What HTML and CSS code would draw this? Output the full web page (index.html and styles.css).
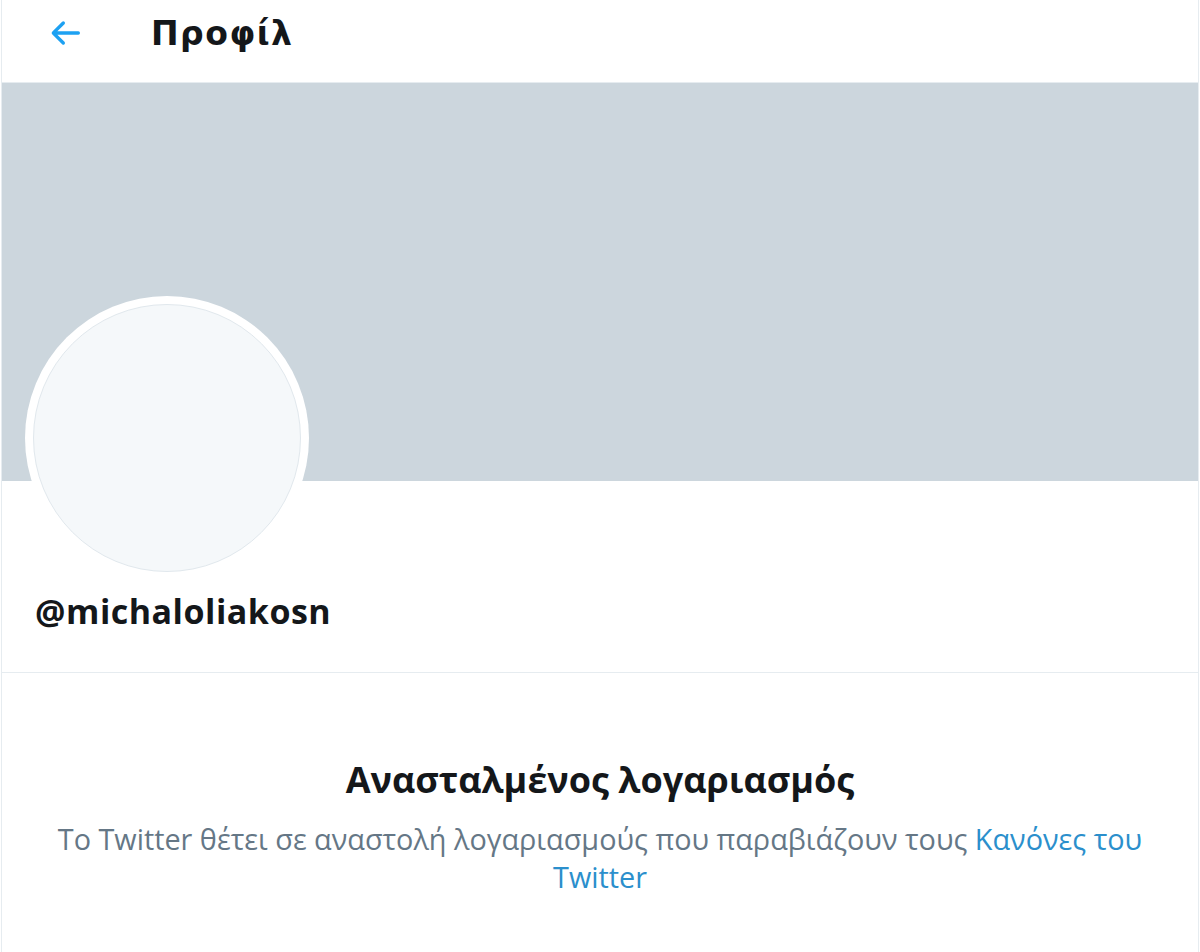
FILE: index.html
```html
<!DOCTYPE html>
<html lang="el">
<head>
<meta charset="utf-8">
<title>Προφίλ</title>
<link rel="stylesheet" href="styles.css">
</head>
<body>
<div class="page">
  <header class="topbar">
    <a class="back" href="#" aria-label="Πίσω">
      <svg viewBox="0 0 24 24" width="40" height="40"><path d="M20 11H7.414l4.293-4.293a1 1 0 0 0-1.414-1.414l-6 6a1 1 0 0 0 0 1.414l6 6a1 1 0 0 0 1.414-1.414L7.414 13H20a1 1 0 1 0 0-2z"/></svg>
    </a>
    <h1 class="title">Προφίλ</h1>
  </header>
  <div class="banner"></div>
  <section class="profile">
    <div class="avatar"><div class="avatar-inner"></div></div>
    <div class="handle">@michaloliakosn</div>
  </section>
  <section class="suspended">
    <h2 class="s-title">Ανασταλμένος λογαριασμός</h2>
    <p class="s-text">Το Twitter θέτει σε αναστολή λογαριασμούς που παραβιάζουν τους <a href="#">Κανόνες του Twitter</a></p>
  </section>
</div>
</body>
</html>
```
FILE: styles.css
```css
html, body {
  margin: 0;
  padding: 0;
  background: #ffffff;
}
body {
  font-family: "Open Sans", "Noto Sans", sans-serif;
  color: #14171a;
}
.page {
  width: 1196px;
  min-height: 952px;
  border-left: 1px solid #e6ecf0;
  border-right: 1px solid #e6ecf0;
  margin-left: 1px;
}
.topbar {
  border-bottom: 1px solid #e6ecf0;
  display: flex;
  align-items: center;
  box-sizing: border-box;
  height: 83px;
  padding-bottom: 16px;
}
.back {
  display: flex;
  margin-left: 43px;
  width: 40px;
  height: 40px;
  align-items: center;
  justify-content: center;
}
.back svg {
  fill: #1da1f2;
}
.title {
  margin: 0 0 0 66px;
  font-family: "DejaVu Sans", sans-serif;
  font-weight: 700;
  font-size: 33px;
  letter-spacing: 1.5px;
  color: #14171a;
}
.banner {
  height: 398px;
  background: #ccd6dd;
}
.profile {
  padding: 0 24px 41px 23px;
  border-bottom: 1px solid #e6ecf0;
}
.avatar {
  width: 284px;
  height: 284px;
  margin-top: -185px;
  border-radius: 50%;
  background: #ffffff;
  padding: 8px;
  box-sizing: border-box;
}
.avatar-inner {
  width: 100%;
  height: 100%;
  border-radius: 50%;
  background: #f5f8fa;
  border: 1px solid #e1e8ed;
  box-sizing: border-box;
}
.handle {
  margin-top: 11px;
  margin-left: 10px;
  font-weight: 700;
  font-size: 34px;
  letter-spacing: 0.5px;
  line-height: 40px;
  color: #14171a;
}
.suspended {
  text-align: center;
  padding: 0 50px;
}
.s-title {
  margin: 84px 0 0;
  font-weight: 700;
  font-size: 36px;
  line-height: 46px;
  color: #14171a;
}
.s-text {
  margin: 17px 0 0;
  font-size: 28.8px;
  line-height: 38px;
  color: #657786;
}
.s-text a {
  color: #2b8fcc;
  text-decoration: none;
}
```
